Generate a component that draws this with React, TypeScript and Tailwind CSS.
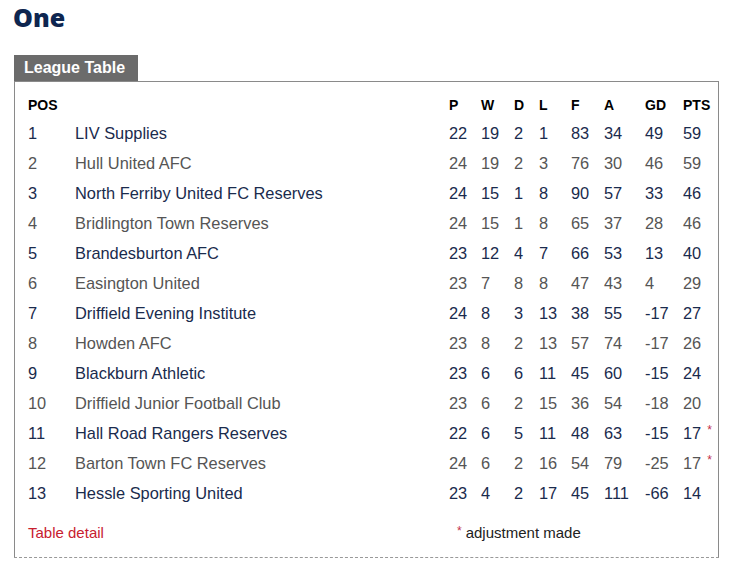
const rows: [number, string, number, number, number, number, number, number, number, number, boolean?][] = [
  [1, "LIV Supplies", 22, 19, 2, 1, 83, 34, 49, 59],
  [2, "Hull United AFC", 24, 19, 2, 3, 76, 30, 46, 59],
  [3, "North Ferriby United FC Reserves", 24, 15, 1, 8, 90, 57, 33, 46],
  [4, "Bridlington Town Reserves", 24, 15, 1, 8, 65, 37, 28, 46],
  [5, "Brandesburton AFC", 23, 12, 4, 7, 66, 53, 13, 40],
  [6, "Easington United", 23, 7, 8, 8, 47, 43, 4, 29],
  [7, "Driffield Evening Institute", 24, 8, 3, 13, 38, 55, -17, 27],
  [8, "Howden AFC", 23, 8, 2, 13, 57, 74, -17, 26],
  [9, "Blackburn Athletic", 23, 6, 6, 11, 45, 60, -15, 24],
  [10, "Driffield Junior Football Club", 23, 6, 2, 15, 36, 54, -18, 20],
  [11, "Hall Road Rangers Reserves", 22, 6, 5, 11, 48, 63, -15, 17, true],
  [12, "Barton Town FC Reserves", 24, 6, 2, 16, 54, 79, -25, 17, true],
  [13, "Hessle Sporting United", 23, 4, 2, 17, 45, 111, -66, 14],
];

const cols = "grid grid-cols-[47px_374px_32px_33px_25px_32px_33px_41px_38px_1fr] items-center";

export default function App() {
  return (
    <div className="min-h-[561px] bg-white font-['Liberation_Sans',Arial,sans-serif]">
      <h1 className="pl-[13px] pt-[1px] font-['Open_Sans',sans-serif] text-[25px] font-extrabold leading-[32px] text-[#0e2650]">
        One
      </h1>

      <div className="ml-[14px] mr-[13px] mt-[22px]">
        <div className="flex h-[26px] w-[124px] items-center bg-[#6b6b6b] pl-[10px] text-[16px] font-bold text-white">
          League Table
        </div>
        <div className="border-x-[1.5px] border-t-[1.5px] border-[#8a8a8a] pb-[14px] pl-[13px] pt-[11px]">
          <div className={`${cols} h-[25px] text-[14px] font-bold text-black`}>
            <div>POS</div>
            <div />
            <div>P</div>
            <div>W</div>
            <div>D</div>
            <div>L</div>
            <div>F</div>
            <div>A</div>
            <div>GD</div>
            <div>PTS</div>
          </div>
          {rows.map((r) => {
            const [pos, name, ...nums] = r;
            const adj = r[10];
            const color = pos % 2 === 1 ? "text-[#1a2b4d]" : "text-[#555]";
            return (
              <div key={pos} className={`${cols} h-[30px] text-[16.4px] ${color}`}>
                <div>{pos}</div>
                <div>{name}</div>
                {nums.slice(0, 8).map((n, i) => (
                  <div key={i}>
                    {n as number}
                    {i === 7 && adj && <span className="ml-[6px] align-top text-[12px] text-[#c3304a]">*</span>}
                  </div>
                ))}
              </div>
            );
          })}
          <div className="mt-[15px] flex h-[20px] items-center text-[15px]">
            <div className="w-[429px] text-[#c8202f]">Table detail</div>
            <div className="text-[#222]">
              <span className="mr-[4px] align-top text-[12px] text-[#c3304a]">*</span>adjustment made
            </div>
          </div>
        </div>
        <div className="border-t border-dashed border-[#999]" />
      </div>
    </div>
  );
}
